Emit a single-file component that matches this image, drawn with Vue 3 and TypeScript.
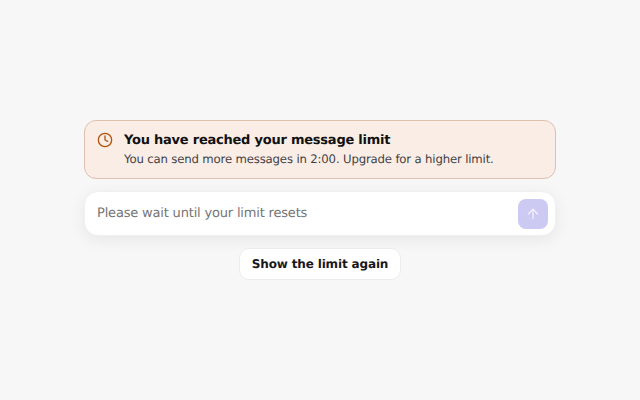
<script setup lang="ts">
const title = 'You have reached your message limit'
const detail = 'You can send more messages in 2:00. Upgrade for a higher limit.'
</script>

<template>
  <main class="page">
    <section class="stack">
      <div class="notice">
        <svg class="clock" width="16" height="16" viewBox="0 0 24 24" fill="none" stroke="currentColor" stroke-width="2" stroke-linecap="round" stroke-linejoin="round">
          <circle cx="12" cy="12" r="10" />
          <path d="M12 6v6l4 2" />
        </svg>
        <div class="copy">
          <div class="title">{{ title }}</div>
          <div class="detail">{{ detail }}</div>
        </div>
      </div>
      <div class="composer">
        <span class="placeholder">Please wait until your limit resets</span>
        <button class="send" type="button">
          <svg width="16" height="16" viewBox="0 0 24 24" fill="none" stroke="currentColor" stroke-width="2" stroke-linecap="round" stroke-linejoin="round">
            <path d="M12 19V5" />
            <path d="m5 12 7-7 7 7" />
          </svg>
        </button>
      </div>
      <button class="again" type="button">Show the limit again</button>
    </section>
  </main>
</template>

<style>
html, body { margin: 0; background: #f7f7f7; }
</style>

<style scoped>
.page {
  width: 640px;
  height: 400px;
  display: flex;
  align-items: center;
  justify-content: center;
  background: #f7f7f7;
  font-family: "DejaVu Sans", sans-serif;
  text-rendering: geometricPrecision;
}
.stack {
  width: 472px;
  display: flex;
  flex-direction: column;
  align-items: center;
  gap: 12px;
}
.notice {
  box-sizing: border-box;
  width: 100%;
  height: 59px;
  display: flex;
  align-items: flex-start;
  gap: 11px;
  padding: 11px 12px;
  background: #f9ede5;
  border: 1px solid #dfbfae;
  border-radius: 12px;
}
.clock { color: #b4550f; flex: none; }
.copy { display: flex; flex-direction: column; gap: 2px; padding-top: 1px; }
.title { font-size: 13px; letter-spacing: -0.23px; font-weight: 700; line-height: 16px; color: #111; }
.detail { font-size: 11.7px; letter-spacing: -0.16px; line-height: 17px; color: #3f3f46; }
.composer {
  box-sizing: border-box;
  width: 100%;
  height: 45px;
  display: flex;
  align-items: center;
  justify-content: space-between;
  padding: 0 7px 0 12px;
  background: #fff;
  border: 1px solid #f0f0f0;
  border-radius: 14px;
  box-shadow: 0 4px 16px rgba(0, 0, 0, 0.07);
}
.placeholder { font-size: 13px; letter-spacing: -0.18px; color: #757575; }
.send {
  width: 30px;
  height: 30px;
  padding: 0;
  display: flex;
  align-items: center;
  justify-content: center;
  color: #f0efff;
  background: #cccaf3;
  border: none;
  border-radius: 8px;
}
.again {
  box-sizing: border-box;
  height: 32px;
  padding: 0 12px;
  font-family: inherit;
  text-rendering: inherit;
  font-size: 12px;
  letter-spacing: -0.15px;
  font-weight: 700;
  color: #18181b;
  background: #fff;
  border: 1px solid #ececec;
  border-radius: 10px;
}
</style>
